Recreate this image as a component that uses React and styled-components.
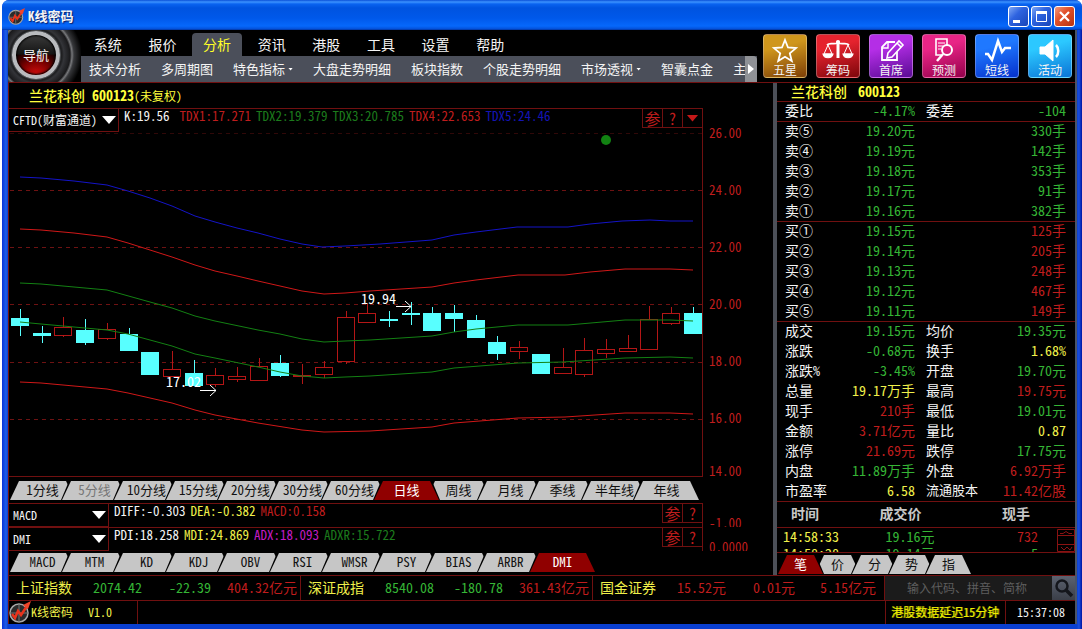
import React from "react"
import styled, { createGlobalStyle, css } from "styled-components"

const colors = {
  line: "#701010",
  red: "#bf1d1d",
  green: "#35b535",
  dark: "#1c7a1c",
  yellow: "#f0f04a",
  white: "#f4f4f4",
  blue: "#1414b4",
  purple: "#c41cc4",
  tab: "#c6c6c6",
  bar: "#4b4f5a",
}

const menu = ["系统", "报价", "分析", "资讯", "港股", "工具", "设置", "帮助"]

const submenu = [
  { text: "技术分析" },
  { text: "多周期图" },
  { text: "特色指标", more: true },
  { text: "大盘走势明细" },
  { text: "板块指数" },
  { text: "个股走势明细" },
  { text: "市场透视", more: true },
  { text: "智囊点金" },
  { text: "主" },
]

const periods = ["1分线", "5分线", "10分线", "15分线", "20分线", "30分线", "60分线", "日线", "周线", "月线", "季线", "半年线", "年线"]
const indicators = ["MACD", "MTM", "KD", "KDJ", "OBV", "RSI", "WMSR", "PSY", "BIAS", "ARBR", "DMI"]
const details = ["笔", "价", "分", "势", "指"]

const prices = ["26.00", "24.00", "22.00", "20.00", "18.00", "16.00", "14.00"]

const quotes = [
  ["委比", "-4.17%", "green", "委差", "-104", "green", true],
  ["卖⑤", "19.20元", "green", "", "330手", "green", true],
  ["卖④", "19.19元", "green", "", "142手", "green"],
  ["卖③", "19.18元", "green", "", "353手", "green"],
  ["卖②", "19.17元", "green", "", "91手", "green"],
  ["卖①", "19.16元", "green", "", "382手", "green"],
  ["买①", "19.15元", "green", "", "125手", "red", true],
  ["买②", "19.14元", "green", "", "205手", "red"],
  ["买③", "19.13元", "green", "", "248手", "red"],
  ["买④", "19.12元", "green", "", "467手", "red"],
  ["买⑤", "19.11元", "green", "", "149手", "red"],
  ["成交", "19.15元", "green", "均价", "19.35元", "green", true],
  ["涨跌", "-0.68元", "green", "换手", "1.68%", "yellow"],
  ["涨跌%", "-3.45%", "green", "开盘", "19.70元", "green"],
  ["总量", "19.17万手", "yellow", "最高", "19.75元", "red"],
  ["现手", "210手", "red", "最低", "19.01元", "green"],
  ["金额", "3.71亿元", "red", "量比", "0.87", "yellow"],
  ["涨停", "21.69元", "red", "跌停", "17.75元", "green"],
  ["内盘", "11.89万手", "green", "外盘", "6.92万手", "red"],
  ["市盈率", "6.58", "yellow", "流通股本", "11.42亿股", "red"],
]

const ticker = [
  { name: "上证指数", values: ["2074.42", "-22.39", "404.32亿元"], tones: ["green", "green", "red"] },
  { name: "深证成指", values: ["8540.08", "-180.78", "361.43亿元"], tones: ["green", "green", "red"] },
  { name: "国金证券", values: ["15.52元", "0.01元", "5.15亿元"], tones: ["red", "red", "red"] },
]

// falling?, high, body top, body bottom, low
const candles = [
  [1, 309, 318, 326, 336],
  [1, 326, 333, 336, 343],
  [0, 317, 327, 336, 337],
  [1, 319, 330, 343, 345],
  [0, 323, 329, 339, 340],
  [1, 328, 334, 351, 351],
  [1, 352, 352, 375, 375],
  [0, 351, 369, 377, 377],
  [1, 360, 373, 386, 386],
  [0, 368, 375, 385, 387],
  [0, 367, 376, 380, 382],
  [0, 358, 366, 381, 381],
  [1, 355, 363, 376, 377],
  [0, 364, 375, 377, 384],
  [0, 361, 367, 375, 378],
  [0, 311, 317, 362, 364],
  [0, 304, 313, 323, 323],
  [1, 311, 319, 321, 327],
  [1, 302, 313, 315, 325],
  [1, 307, 313, 331, 331],
  [1, 305, 313, 319, 332],
  [1, 315, 320, 338, 338],
  [1, 336, 342, 354, 360],
  [0, 341, 347, 352, 359],
  [1, 354, 354, 374, 374],
  [0, 348, 367, 374, 374],
  [0, 338, 350, 375, 377],
  [0, 339, 349, 354, 358],
  [0, 335, 348, 352, 352],
  [0, 306, 319, 350, 350],
  [0, 307, 313, 324, 325],
  [1, 307, 313, 334, 334],
]

const bands = [
  ["#1414c8", "20,177 41,178 74,181 107,185 128,191 150,198 172,206 195,216 215,222 237,228 258,233 280,239 302,244 322,247 345,246 380,244 432,240 454,235 476,232 517,227 568,227 590,224 622,221 650,220 670,221 693,221"],
  ["#d01818", "20,229 41,230 74,233 107,237 128,243 150,250 172,257 195,265 215,271 237,276 258,281 280,286 302,291 324,294 345,293 370,291 432,287 454,283 476,280 518,275 565,275 590,272 625,269 670,269 693,270"],
  ["#138013", "20,283 41,284 74,287 107,290 150,302 172,308 195,316 215,321 258,330 280,334 302,339 324,342 345,341 370,340 432,336 454,332 476,329 518,325 568,325 625,320 670,320 693,321"],
  ["#138013", "20,322 41,324 74,327 107,330 128,334 150,340 172,346 195,354 215,358 258,367 280,372 302,376 324,378 345,377 370,376 432,372 454,368 518,363 563,362 625,358 670,357 693,358"],
  ["#d01818", "20,382 41,383 74,386 107,389 128,393 150,398 172,403 195,410 215,415 258,423 302,430 324,432 370,431 432,427 454,423 518,418 565,417 625,413 670,413 693,414"],
]

const Logo = ({ size }) => (
  <svg width={size} height={size} viewBox="0 0 22 22" aria-hidden="true">
    <circle cx="10" cy="12" r="9" fill="#2b2b2b" stroke="#a9a9a9" strokeWidth="1.5" />
    <path d="M10 3v18M1 12h18" stroke="#777" strokeWidth="1" />
    <path d="M3 13l3 4 3-7 3 4 6-9" fill="none" stroke="#e8331c" strokeWidth="2.5" />
    <path d="M14 4l8-4-3 8z" fill="#f0452a" />
  </svg>
)

const Glyph = ({ children }) => (
  <svg width="32" height="26" viewBox="0 0 32 26" fill="none" stroke="#fff" strokeWidth="2" aria-hidden="true">
    {children}
  </svg>
)

const shortcuts = [
  {
    text: "五星",
    from: "#cf961c",
    to: "#7d3f07",
    icon: <path strokeWidth="1.8" d="M16 3l3 7.5 8 .6-6.200 5.200 2 7.700-6.800-4.300L9.200 24l2-7.700L5 11.100l8-.6z" />,
  },
  {
    text: "筹码",
    from: "#e5232e",
    to: "#7d060b",
    icon: (
      <g strokeWidth="1.2">
        <path d="M5 8c3-3 6 0 11-2 5 2 8-1 11 2" strokeWidth="1.8" />
        <path d="M16 6v15" strokeWidth="3" />
        <path d="M6 8L2 17h8zM26 8l-4 9h8z" strokeWidth="1" />
        <path d="M1 17h10c-1 5-9 5-10 0zM21 17h10c-1 5-9 5-10 0z" fill="#fff" />
        <circle cx="16" cy="5" r="1.500" fill="#fff" />
      </g>
    ),
  },
  {
    text: "首席",
    from: "#b42ee6",
    to: "#5a0b94",
    icon: (
      <g>
        <path d="M20 5h-8l-5 5v13h15v-8" strokeWidth="1.8" />
        <path d="M13 6v5H7" strokeWidth="1.4" />
        <path d="M13 16L24 4l4 4-11 12-5 1zM22 6l4 4" strokeWidth="1.6" />
      </g>
    ),
  },
  {
    text: "预测",
    from: "#e82586",
    to: "#94004b",
    icon: (
      <g>
        <path d="M19 8V2H8v16h5" strokeWidth="1.6" />
        <path d="M10 6h7M10 9h5M10 12h3" strokeWidth="1" />
        <circle cx="19" cy="13" r="5" />
        <path d="M15 17L9 24" strokeWidth="2.5" />
      </g>
    ),
  },
  {
    text: "短线",
    from: "#1f78ff",
    to: "#0531cc",
    icon: <path d="M4 17h3l4 6L17 4l4 11 3-4h6" strokeWidth="2.500" />,
  },
  {
    text: "活动",
    from: "#2cc8ff",
    to: "#0a74d6",
    icon: (
      <g>
        <path d="M6 10h5l8-7v21l-8-7H6z" fill="#fff" strokeWidth="1" />
        <path d="M22 8c3 3 3 9 0 12" strokeWidth="2.500" />
      </g>
    ),
  },
]

const Chart = () => (
  <Plot viewBox="9 133 693 343" preserveAspectRatio="xMinYMin meet">
    {[133, 190, 247, 304, 362, 419].map((y, i) => (
      <path key={y} d={`M10 ${y}.500H702`} stroke={i ? "#6e1212" : "#300808"} strokeDasharray="4 4" />
    ))}
    {candles.map(([down, high, top, bottom, low], i) => {
      const x = Math.round(20 + i * 21.7)
      return down ? (
        <g key={i}>
          <path d={`M${x}.500 ${high}V${low}`} stroke="#58ffff" />
          <rect x={x - 9} y={top} width="18" height={bottom - top} fill="#58ffff" />
        </g>
      ) : (
        <g key={i} fill="none" stroke="#b41616">
          <path d={`M${x}.500 ${high}V${top}M${x}.500 ${bottom}V${low}`} />
          <rect x={x - 8.5} y={top + 0.5} width="17" height={bottom - top - 1} />
        </g>
      )
    })}
    {bands.map(([color, points], i) => (
      <polyline key={i} points={points} fill="none" stroke={color} />
    ))}
    <circle cx="606" cy="140" r="5" fill="#128212" />
    <g fill="none" stroke="#fff">
      <path d="M396 306.500h15M405 301l6 5.500-6 5.500" />
      <path d="M200 390.500h16M210 385l6 5.500-6 5.500" />
    </g>
    <Mark x="361" y="304">19.94</Mark>
    <Mark x="166" y="387">17.02</Mark>
  </Plot>
)

const Tabs = ({ items, active, muted, step, size, label }) => (
  <TabList role="tablist" aria-label={label}>
    {items.map((item) => (
      <Tab key={item} type="button" role="tab" aria-selected={item === active} $on={item === active} $step={step} $size={size}>
        <TabFace $on={item === active} $muted={item === muted}>
          {item}
        </TabFace>
      </Tab>
    ))}
  </TabList>
)

const App = () => {
  return (
    <Frame>
      <GlobalStyle />
      <TitleBar>
        <Logo size={17} />
        <AppName>K线密码</AppName>
        <WinButton type="button" aria-label="最小化">
          <svg width="19" height="19"><path d="M4 14.500h7" stroke="#fff" strokeWidth="3" /></svg>
        </WinButton>
        <WinButton type="button" aria-label="最大化">
          <svg width="19" height="19" fill="none" stroke="#fff">
            <path d="M4.500 5v9.500h10V5" />
            <path d="M4 5.500h11" strokeWidth="3" />
          </svg>
        </WinButton>
        <WinButton type="button" aria-label="关闭" $close>
          <svg width="19" height="19"><path d="M5 5l9 9M14 5l-9 9" stroke="#fff" strokeWidth="2.200" /></svg>
        </WinButton>
      </TitleBar>
      <Client>
        <Header>
          <NavHolder>
            <NavButton type="button">导航</NavButton>
          </NavHolder>
          <Menus>
            <MenuRow>
              {menu.map((item) => (
                <MenuItem key={item} type="button" $on={item === "分析"}>
                  {item}
                </MenuItem>
              ))}
            </MenuRow>
            <SubRow>
              <SubItems>
                {submenu.map((item) => (
                  <SubItem key={item.text} type="button">
                    {item.text}
                    {item.more && <Triangle $w={5} $h={3} $color="#fff" />}
                  </SubItem>
                ))}
              </SubItems>
              <MoreButton type="button" aria-label="更多">
                <svg width="6" height="10"><path d="M0 0l6 5-6 5z" fill="#fff" /></svg>
              </MoreButton>
            </SubRow>
          </Menus>
          <Shortcuts>
            {shortcuts.map((item) => (
              <Shortcut key={item.text} type="button" $from={item.from} $to={item.to}>
                <Glyph>{item.icon}</Glyph>
                {item.text}
              </Shortcut>
            ))}
          </Shortcuts>
        </Header>
        <Main>
          <Left>
            <StockTitle>
              兰花科创 <b>600123</b>
              <small>(未复权)</small>
            </StockTitle>
            <ChartBand>
              <ChartArea>
                <Toolbar>
                  <Picker type="button" $w={110}>
                    CFTD(财富通道)
                    <Triangle $w={14} $h={8} $color="#fff" />
                  </Picker>
                  <Readings>
                    <Reading $tone="white" $wide>K:19.56</Reading>
                    <Reading $tone="red">TDX1:17.271</Reading>
                    <Reading $tone="dark">TDX2:19.379</Reading>
                    <Reading $tone="dark">TDX3:20.785</Reading>
                    <Reading $tone="red">TDX4:22.653</Reading>
                    <Reading $tone="blue">TDX5:24.46</Reading>
                  </Readings>
                  <Tool type="button">参</Tool>
                  <Tool type="button">?</Tool>
                  <Tool type="button" aria-label="展开">
                    <Triangle $w={12} $h={7} $color="#c41818" />
                  </Tool>
                </Toolbar>
                <Chart />
              </ChartArea>
              <Axis>
                {prices.map((p) => (
                  <AxisLabel key={p}>{p}</AxisLabel>
                ))}
              </Axis>
            </ChartBand>
            <TabStrip $top={4} $height={26}>
              <Tabs items={periods} active="日线" muted="5分线" step={52} size={65} label="周期" />
            </TabStrip>
            <IndicatorBand>
              <IndicatorRow>
                <Picker type="button" $w={100}>
                  MACD
                  <Triangle $w={14} $h={8} $color="#fff" />
                </Picker>
                <Readings>
                  <Reading $tone="white">DIFF:-0.303</Reading>
                  <Reading $tone="yellow">DEA:-0.382</Reading>
                  <Reading $tone="red">MACD:0.158</Reading>
                </Readings>
                <Tool type="button">参</Tool>
                <Tool type="button">?</Tool>
              </IndicatorRow>
              <ClippedLabel>-1.00</ClippedLabel>
            </IndicatorBand>
            <IndicatorBand>
              <IndicatorRow>
                <Picker type="button" $w={100}>
                  DMI
                  <Triangle $w={14} $h={8} $color="#fff" />
                </Picker>
                <Readings>
                  <Reading $tone="white">PDI:18.258</Reading>
                  <Reading $tone="yellow">MDI:24.869</Reading>
                  <Reading $tone="purple">ADX:18.093</Reading>
                  <Reading $tone="dark">ADXR:15.722</Reading>
                </Readings>
                <Tool type="button">参</Tool>
                <Tool type="button">?</Tool>
              </IndicatorRow>
              <ClippedLabel>0.0000</ClippedLabel>
            </IndicatorBand>
            <TabStrip $top={2} $height={24}>
              <Tabs items={indicators} active="DMI" step={52} size={65} label="指标" />
            </TabStrip>
          </Left>
          <Right>
            <QuoteTitle>
              兰花科创 <b>600123</b>
            </QuoteTitle>
            <QuoteTable>
              <tbody>
                {quotes.map(([label, value, tone, label2, value2, tone2, line]) => (
                  <QuoteRow key={label} $line={line}>
                    <QuoteLabel $w={58} $pad={8}>{label}</QuoteLabel>
                    <QuoteValue $tone={tone} $w={80}>{value}</QuoteValue>
                    <QuoteLabel $w={66} $pad={11} $small={label2.length > 3}>{label2}</QuoteLabel>
                    <QuoteValue $tone={tone2} $end>{value2}</QuoteValue>
                  </QuoteRow>
                ))}
              </tbody>
            </QuoteTable>
            <Deals>
              <DealTable>
                <thead>
                  <tr>
                    <DealHead>时间</DealHead>
                    <DealHead>成交价</DealHead>
                    <DealHead>现手</DealHead>
                  </tr>
                </thead>
                <tbody>
                  <tr>
                    <DealCell $tone="yellow">14:58:33</DealCell>
                    <DealCell $tone="green">19.16元</DealCell>
                    <DealCell $tone="red">732</DealCell>
                  </tr>
                  <tr>
                    <DealCell $tone="yellow">14:58:28</DealCell>
                    <DealCell $tone="green">19.14元</DealCell>
                    <DealCell $tone="green">5</DealCell>
                  </tr>
                </tbody>
              </DealTable>
              <Scroller>
                <svg width="18" height="23" fill="none" stroke="#8a1212" aria-hidden="true">
                  <path d="M.500 .500h17v22H.500zM.500 6.500h17M.500 15.500h17M3 4.500h3l3-2 3 2h3M4 18l3 3 3-3 3 3 2-3" />
                </svg>
              </Scroller>
            </Deals>
            <TabStrip $top={2} $height={22}>
              <Tabs items={details} active="笔" step={37} size={45} label="明细" />
            </TabStrip>
          </Right>
        </Main>
        <Ticker>
          {ticker.map((item) => (
            <Index key={item.name}>
              <IndexName>{item.name}</IndexName>
              {item.values.map((value, i) => (
                <IndexValue key={value} $tone={item.tones[i]}>
                  {value}
                </IndexValue>
              ))}
            </Index>
          ))}
          <Search>
            <SearchInput type="text" aria-label="搜索" placeholder="输入代码、拼音、简称" />
            <SearchButton type="button" aria-label="搜索">
              <svg width="20" height="20" fill="none" stroke="#14161c" strokeWidth="2.500">
                <circle cx="8" cy="8" r="5.500" />
                <path d="M12 12l6 6" strokeWidth="3.500" />
              </svg>
            </SearchButton>
          </Search>
        </Ticker>
        <Status>
          <Brand>
            <Logo size={22} />
            K线密码
            <Version>V1.0</Version>
          </Brand>
          <Notice>港股数据延迟15分钟</Notice>
          <Clock>15:37:08</Clock>
        </Status>
      </Client>
    </Frame>
  )
}

export default App

const GlobalStyle = createGlobalStyle`
  * {
    box-sizing: border-box;
  }

  body {
    margin: 0;
    background: #fff;
  }

  body, button, input {
    font-family: "Noto Sans CJK SC", "Liberation Mono", sans-serif;
    font-feature-settings: "hwid" 1;
    font-size: 14px;
    line-height: 18px;
  }

  button {
    padding: 0;
    border: 0;
    background: none;
    color: inherit;
    white-space: nowrap;
  }

  svg {
    display: block;
    flex-shrink: 0;
  }
`

const Frame = styled.div`
  display: flex;
  flex-direction: column;
  height: 100vh;
  min-height: 629px;
  min-width: 1080px;
  margin-left: 2px;
  padding: 0 5px 5px 6px;
  border-radius: 7px 7px 0 0;
  overflow: hidden;
  background: linear-gradient(90deg, #0831d9, #1f5fe6 4px, #0a3fd0 6px, #0a3fd0 calc(100% - 5px), #1a50e0 calc(100% - 3px), #0014a0);
  color: ${colors.white};
`

const TitleBar = styled.header`
  display: flex;
  align-items: center;
  flex-shrink: 0;
  gap: 2px;
  height: 30px;
  margin: 0 -5px 0 -6px;
  padding: 2px 7px 0 6px;
  background: linear-gradient(#0a50d8, #3c93ff 2px, #0a63f0 4px, #0053e0 8px, #0058ea 18px, #0668fb 26px, #0450d8 29px, #022f94);
`

const AppName = styled.h1`
  flex: 1;
  margin: 0;
  padding-left: 1px;
  font-size: 13px;
  font-weight: 700;
  text-shadow: 1px 1px 1px #0a1f6a;
`

const WinButton = styled.button`
  width: 21px;
  height: 21px;
  border: 1px solid #fff;
  border-radius: 3px;
  background: ${(p) =>
    p.$close
      ? "linear-gradient(135deg, #f09a80, #e2512b 40%, #b8330f)"
      : "linear-gradient(135deg, #7fa8f5, #2e63e0 40%, #1845b8)"};
`

const Client = styled.div`
  display: flex;
  flex-direction: column;
  flex: 1;
  min-height: 0;
  border-right: 2px solid #4a5468;
  background: #000;
`

const Header = styled.div`
  display: flex;
  flex-shrink: 0;
  height: 53px;
  border-bottom: 1px solid ${colors.line};
`

const NavHolder = styled.div`
  flex-shrink: 0;
  width: 73px;
  padding: 1px 0 0 4px;
  background: radial-gradient(circle at 28px 25px, #0c0c0c 24px, #333438 28px, #1a1a1c 34px, #77787b 36px, #36373a 38px, #000 46px);
`

const NavButton = styled.button`
  width: 48px;
  height: 48px;
  border: 4px solid #b9bbbe;
  border-radius: 50%;
  background:
    linear-gradient(#3a3a3a, #141414 48%, transparent 50%),
    radial-gradient(circle at 50% 105%, #e01010, #7a0000 35%, #120000 62%);
  box-shadow: inset 0 0 2px 1px #000, 0 0 1px 1px #55585c;
  font-size: 13px;
`

const Menus = styled.nav`
  display: flex;
  flex-direction: column;
  flex: 1;
  min-width: 0;
`

const MenuRow = styled.div`
  display: flex;
  gap: 5px;
  width: 432px;
  height: 26px;
  padding-top: 3px;
  margin-left: 2px;
`

const MenuItem = styled.button`
  flex: 1;
  padding-bottom: 2px;
  border-radius: 4px 4px 0 0;
  ${(p) => p.$on && css`
    background: ${colors.bar};
    color: #ffff28;
  `}
`

const SubRow = styled.div`
  display: flex;
  height: 26px;
  background: ${colors.bar};
`

const SubItems = styled.div`
  display: flex;
  flex: 1;
  gap: 20px;
  min-width: 0;
  padding-left: 8px;
  overflow: hidden;
`

const SubItem = styled.button`
  display: flex;
  flex-shrink: 0;
  align-items: center;
  gap: 3px;
  font-size: 13px;
`

const Triangle = styled.span`
  width: ${(p) => p.$w}px;
  height: ${(p) => p.$h}px;
  background: ${(p) => p.$color};
  clip-path: polygon(0 0, 100% 0, 50% 100%);
`

const MoreButton = styled.button`
  display: flex;
  align-items: center;
  justify-content: center;
  width: 12px;
  border-radius: 0 4px 0 0;
  background: #8f9196;
`

const Shortcuts = styled.div`
  display: flex;
  gap: 9px;
  padding: 4px 3px 0 6px;
`

const Shortcut = styled.button`
  display: flex;
  flex-direction: column;
  align-items: center;
  width: 44px;
  height: 44px;
  padding-top: 2px;
  border: 1px solid rgba(255, 255, 255, 0.3);
  border-radius: 4px;
  background: linear-gradient(165deg, ${(p) => p.$from} 30%, ${(p) => p.$to});
  font-size: 12px;
  line-height: 13px;
`

const Main = styled.main`
  display: flex;
  flex: 1;
  min-height: 0;
  border-left: 1px solid ${colors.line};
`

const Left = styled.section`
  display: flex;
  flex-direction: column;
  flex: 1;
  min-width: 0;
`

const StockTitle = styled.h2`
  height: 25px;
  margin: 0;
  padding: 3px 0 0 20px;
  color: #ffff3c;
  font-size: 14px;
  font-weight: 500;

  small {
    font-size: 12px;
    font-weight: 400;
  }
`

const ChartBand = styled.div`
  display: grid;
  grid-template-columns: 1fr 70px;
  flex: 1;
  min-height: 0;
`

const ChartArea = styled.div`
  display: flex;
  flex-direction: column;
  min-width: 0;
  min-height: 0;
  border: solid ${colors.line};
  border-width: 1px 1px 1px 0;
`

const Toolbar = styled.div`
  display: flex;
  align-items: flex-start;
  height: 24px;
`

const Picker = styled.button`
  display: flex;
  align-items: center;
  justify-content: space-between;
  width: ${(p) => p.$w}px;
  height: 23px;
  padding: 0 2px 0 4px;
  border: solid ${colors.line};
  border-width: 0 1px 1px 0;
  font-size: 12px;
`

const Readings = styled.div`
  display: flex;
  flex: 1;
  gap: 5px;
  padding-left: 5px;
  font-size: 13px;
  line-height: 13px;
  white-space: nowrap;
`

const Reading = styled.span`
  margin-right: ${(p) => (p.$wide ? 5 : 0)}px;
  color: ${(p) => colors[p.$tone]};
`

const Tool = styled.button`
  display: flex;
  align-items: center;
  justify-content: center;
  width: 20px;
  height: 19px;
  border: solid ${colors.line};
  border-width: 0 0 1px 1px;
  color: ${colors.red};
  font-size: 16px;
`

const Plot = styled.svg`
  width: 100%;
  flex: 1 1 0;
  min-height: 0;
`

const Mark = styled.text`
  fill: #fff;
  font-size: 14px;
`

const Axis = styled.div`
  padding: 17px 0 0 6px;
  color: ${colors.red};
  font-size: 13px;
  line-height: 16px;
`

const AxisLabel = styled.div`
  height: 57px;

  &:nth-last-child(2) {
    height: 53px;
  }

  &:last-child {
    height: 14px;
  }
`

const TabStrip = styled.div`
  flex-shrink: 0;
  height: ${(p) => p.$height}px;
  padding-top: ${(p) => p.$top}px;
`

const TabList = styled.div`
  display: flex;
`

const Tab = styled.button`
  position: relative;
  z-index: ${(p) => (p.$on ? 1 : 0)};
  width: ${(p) => p.$size + 2}px;
  height: 19px;
  margin-right: ${(p) => p.$step - p.$size - 2}px;
  padding: 0 1px;
  background: #000;
  clip-path: polygon(0 100%, 8px 0, calc(100% - 8px) 0, 100% 100%);
  font-size: 13px;
`

const TabFace = styled.span`
  display: block;
  height: 19px;
  background: ${(p) => (p.$on ? "#900000" : colors.tab)};
  clip-path: polygon(0 100%, 9px 0, calc(100% - 9px) 0, 100% 100%);
  color: ${(p) => (p.$on ? "#fff" : p.$muted ? "#777" : "#111")};
  line-height: 18px;
`

const IndicatorBand = styled.div`
  display: grid;
  grid-template-columns: 1fr 70px;
  flex-shrink: 0;
  height: 24px;
  overflow: hidden;
`

const IndicatorRow = styled.div`
  display: flex;
  align-items: flex-start;
  border: solid ${colors.line};
  border-width: 1px 1px 0 0;
`

const ClippedLabel = styled.div`
  padding: 12px 0 0 6px;
  color: ${colors.red};
  font-size: 13px;
  line-height: 16px;
`

const Right = styled.aside`
  display: flex;
  flex-direction: column;
  flex-shrink: 0;
  width: 302px;
  border-left: 4px solid #4c5058;
`

const QuoteTitle = styled.h2`
  height: 18px;
  margin: 0;
  padding-left: 14px;
  color: #ffff3c;
  font-size: 14px;
  font-weight: 500;
  line-height: 16px;

  b {
    margin-left: 4px;
  }
`

const QuoteTable = styled.table`
  width: 100%;
  table-layout: fixed;
  border-spacing: 0;
  line-height: 16px;
  white-space: nowrap;
`

const QuoteRow = styled.tr`
  th, td {
    height: 20px;
    border-top: 1px solid ${(p) => (p.$line ? colors.line : "transparent")};
    vertical-align: top;
  }
`

const QuoteLabel = styled.th`
  width: ${(p) => p.$w}px;
  padding: 0 0 0 ${(p) => p.$pad}px;
  font-size: ${(p) => (p.$small ? 13 : 14)}px;
  font-weight: 400;
  text-align: left;
`

const QuoteValue = styled.td`
  width: ${(p) => (p.$w ? `${p.$w}px` : "auto")};
  padding: 0 ${(p) => (p.$end ? 9 : 0)}px 0 0;
  color: ${(p) => colors[p.$tone]};
  text-align: right;
`

const Deals = styled.div`
  display: flex;
  align-items: flex-start;
  flex: 1;
  min-height: 0;
  border: solid ${colors.line};
  border-width: 1px 0;
  overflow: hidden;
`

const DealTable = styled.table`
  flex: 1;
  table-layout: fixed;
  border-spacing: 0;
  margin-right: -18px;
`

const DealHead = styled.th`
  height: 26px;
  padding: 0 0 0 14px;
  border-bottom: 1px solid ${colors.line};
  color: #c8c8c8;
  line-height: 22px;
  text-align: left;
  vertical-align: top;

  &:nth-child(2) {
    padding-left: 20px;
  }

  &:nth-child(3) {
    padding-right: 45px;
    text-align: right;
  }
`

const DealCell = styled.td`
  height: 17px;
  padding: 0 0 0 6px;
  color: ${(p) => colors[p.$tone]};
  line-height: 17px;

  &:nth-child(2) {
    padding-left: 26px;
  }

  &:last-child {
    padding-right: 37px;
    text-align: right;
  }
`

const Scroller = styled.div`
  margin-top: 27px;
`

const Ticker = styled.div`
  display: flex;
  flex-shrink: 0;
  height: 26px;
  border: solid ${colors.line};
  border-width: 1px 0 1px 1px;
`

const Index = styled.div`
  display: grid;
  grid-template-columns: 64px 69px 69px 86px;
  flex-shrink: 0;
  width: 292px;
  border-right: 1px solid ${colors.line};
  line-height: 22px;

  &:nth-child(3) {
    grid-template-columns: 64px 69px 69px 81px;
  }
`

const IndexName = styled.span`
  padding-left: 7px;
  color: ${colors.yellow};
  white-space: nowrap;
`

const IndexValue = styled.span`
  color: ${(p) => colors[p.$tone]};
  text-align: right;
`

const Search = styled.div`
  display: flex;
  flex: 1;
  min-width: 0;
  background: #1b1b1b;
`

const SearchInput = styled.input`
  flex: 1;
  min-width: 0;
  padding: 0 0 0 22px;
  border: 0;
  background: none;
  color: #ccc;
  font-size: 12px;

  &::placeholder {
    color: #5e5e5e;
  }
`

const SearchButton = styled.button`
  display: flex;
  align-items: center;
  justify-content: center;
  width: 23px;
  background: linear-gradient(#5c6270, #3a3e48);
`

const Status = styled.footer`
  display: flex;
  flex-shrink: 0;
  height: 23px;
  border: solid ${colors.line};
  border-width: 0 0 0 1px;
  font-size: 12px;
  line-height: 22px;
`

const Brand = styled.div`
  display: flex;
  width: 129px;
  border-right: 1px solid ${colors.line};
  color: ${colors.yellow};
`

const Version = styled.span`
  margin-left: 15px;
`

const Notice = styled.div`
  width: 121px;
  margin-left: auto;
  padding-left: 5px;
  border: solid ${colors.line};
  border-width: 0 1px;
  color: #f0f000;
  text-shadow: 1px 0 #8a8a00;
  white-space: nowrap;
`

const Clock = styled.time`
  width: 69px;
  padding-left: 11px;
`
